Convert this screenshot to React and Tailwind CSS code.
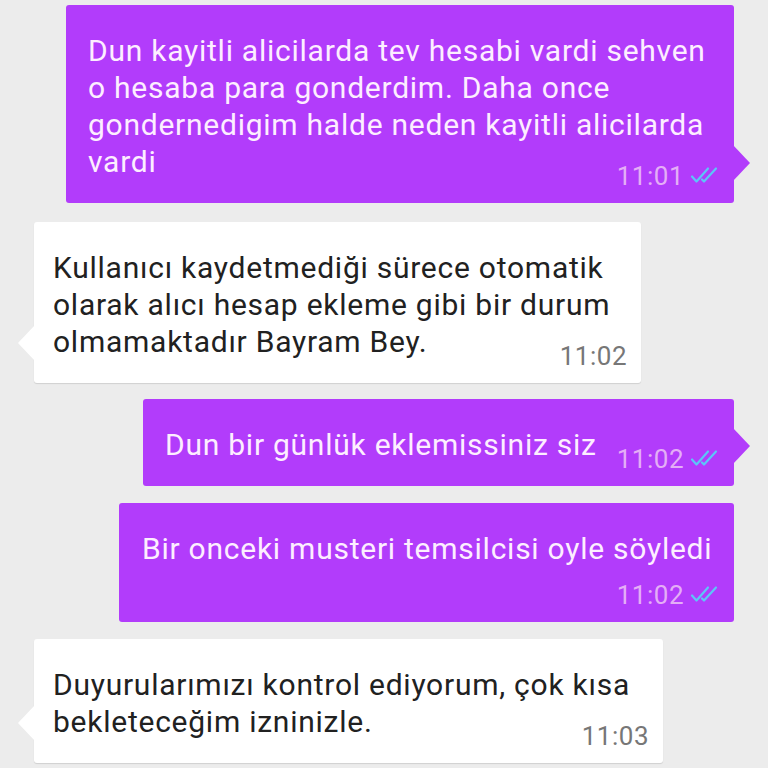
import React from "react";

function Ticks() {
  return (
    <svg width="32" height="18" viewBox="0 0 32 18" className="ml-[6px] mb-[2px]" fill="none" stroke="#5cc6f7" strokeWidth="2.2" strokeLinecap="round" strokeLinejoin="round">
      <path d="M2 10.5 L6.5 15.5 L18 2.5" />
      <path d="M12 13.5 L14 15.5 L26 2.5" />
    </svg>
  );
}

function TailRight({ color }) {
  return (
    <svg width="18" height="36" viewBox="0 0 18 36" className="absolute right-[-17px] bottom-[22px]">
      <polygon points="0,0 17,18 0,36" fill={color} />
    </svg>
  );
}

function TailLeft() {
  return (
    <svg width="18" height="36" viewBox="0 0 18 36" className="absolute left-[-17px] bottom-[22px]">
      <polygon points="18,0 1,18 18,36" fill="#ffffff" />
    </svg>
  );
}

function OutTime({ t, className = "" }) {
  return (
    <div className={"flex items-center text-[26px] leading-[30px] tracking-[0.5px] text-[#e4aef6] whitespace-nowrap " + className}>
      {t}
      <Ticks />
    </div>
  );
}

function InTime({ t }) {
  return (
    <div className="block mt-[18px] text-[26px] leading-[30px] tracking-[0.5px] text-[#777777] whitespace-nowrap">{t}</div>
  );
}

export default function App() {
  return (
    <div className="w-[768px] h-[768px] overflow-hidden bg-[#ececec] flex flex-col pt-[5px] text-[30px] leading-[37px] tracking-[0.75px]" style={{ fontFamily: "Roboto, 'Noto Sans', sans-serif" }}>
      {/* Bubble 1 */}
      <div className="self-end mr-[34px] relative w-[668px] bg-[#b23cfb] rounded-[3px] pl-[22px] pr-[12px] pt-[27px] pb-[12px] text-[#fdeeff]">
        <div className="whitespace-nowrap">Dun kayitli alicilarda tev hesabi vardi sehven</div>
        <div className="whitespace-nowrap">o hesaba para gonderdim. Daha once</div>
        <div className="whitespace-nowrap">gondernedigim halde neden kayitli alicilarda</div>
        <div className="flex justify-between items-start">
          <span className="whitespace-nowrap">vardi</span>
          <OutTime t="11:01" className="mt-[18px]" />
        </div>
        <TailRight color="#b23cfb" />
      </div>

      {/* Bubble 2 */}
      <div className="self-start ml-[34px] mt-[19px] relative w-[607px] bg-white rounded-[3px] pl-[19px] pr-[14px] pt-[27px] pb-[12px] text-[#212121] shadow-[0_1px_1px_rgba(0,0,0,0.12)]">
        <div className="whitespace-nowrap">Kullanıcı kaydetmediği sürece otomatik</div>
        <div className="whitespace-nowrap">olarak alıcı hesap ekleme gibi bir durum</div>
        <div className="flex justify-between items-start">
          <span className="whitespace-nowrap">olmamaktadır Bayram Bey.</span>
          <InTime t="11:02" />
        </div>
        <TailLeft />
      </div>

      {/* Bubble 3 */}
      <div className="self-end mr-[34px] mt-[16px] relative w-[591px] bg-[#b23cfb] rounded-[3px] pl-[22px] pr-[12px] pt-[27px] pb-[12px] text-[#fdeeff]">
        <div className="flex justify-between items-start">
          <span className="whitespace-nowrap">Dun bir günlük eklemissiniz siz</span>
          <OutTime t="11:02" className="mt-[18px]" />
        </div>
        <TailRight color="#b23cfb" />
      </div>

      {/* Bubble 4 */}
      <div className="self-end mr-[34px] mt-[17px] relative w-[615px] bg-[#b23cfb] rounded-[3px] pl-[23px] pr-[12px] pt-[27px] pb-[12px] text-[#fdeeff]">
        <div className="whitespace-nowrap">Bir onceki musteri temsilcisi oyle söyledi</div>
        <div className="flex justify-end mt-[13px]">
          <OutTime t="11:02" />
        </div>
      </div>

      {/* Bubble 5 */}
      <div className="self-start ml-[34px] mt-[17px] relative w-[629px] bg-white rounded-[3px] pl-[19px] pr-[14px] pt-[27px] pb-[12px] text-[#212121] shadow-[0_1px_1px_rgba(0,0,0,0.12)]">
        <div className="whitespace-nowrap">Duyurularımızı kontrol ediyorum, çok kısa</div>
        <div className="flex justify-between items-start">
          <span className="whitespace-nowrap">bekleteceğim izninizle.</span>
          <InTime t="11:03" />
        </div>
        <TailLeft />
      </div>
    </div>
  );
}
